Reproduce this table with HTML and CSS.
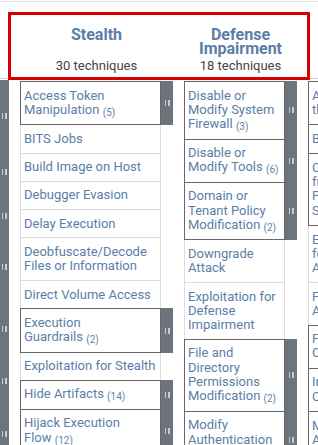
FILE: index.html
```html
<!DOCTYPE html>
<html lang="en">
<head>
<meta charset="utf-8">
<title>ATT&amp;CK Matrix</title>
<link rel="stylesheet" href="styles.css">
</head>
<body>
<div class="topline"></div>
<div class="matrix">
  <div class="head">
    <div class="hspace"></div>
    <div class="tactic w1"><div class="tname">Stealth</div><div class="tcount">30 techniques</div></div>
    <div class="tactic w2"><div class="tname">Defense Impairment</div><div class="tcount">18 techniques</div></div>
    <div class="tactic w3"><div class="tname">Credential Access</div><div class="tcount">17 techniques</div></div>
  </div>
  <div class="grid">
    <div class="prevbar">
      <div class="seg s72"><span class="grip"></span></div>
      <div class="seg s40"><span class="grip"></span></div>
      <div class="seg s48"><span class="grip"></span></div>
      <div class="seg s54"><span class="grip"></span></div>
      <div class="seg s70"><span class="grip"></span></div>
      <div class="seg s34"><span class="grip"></span></div>
      <div class="seg s72"><span class="grip"></span></div>
    </div>

    <div class="col w1">
      <div class="row sup"><div class="cell">Access Token Manipulation&nbsp;<span class="cnt">(5)</span></div><div class="bar"><span class="grip"></span></div></div>
      <div class="row"><div class="cell">BITS Jobs</div></div>
      <div class="row"><div class="cell">Build Image on Host</div></div>
      <div class="row"><div class="cell">Debugger Evasion</div></div>
      <div class="row"><div class="cell">Delay Execution</div></div>
      <div class="row"><div class="cell">Deobfuscate/Decode Files or Information</div></div>
      <div class="row"><div class="cell">Direct Volume Access</div></div>
      <div class="row sup"><div class="cell">Execution Guardrails&nbsp;<span class="cnt">(2)</span></div><div class="bar"><span class="grip"></span></div></div>
      <div class="row"><div class="cell">Exploitation for Stealth</div></div>
      <div class="row sup"><div class="cell">Hide Artifacts&nbsp;<span class="cnt">(14)</span></div><div class="bar"><span class="grip"></span></div></div>
      <div class="row sup"><div class="cell">Hijack Execution Flow&nbsp;<span class="cnt">(12)</span></div><div class="bar"><span class="grip"></span></div></div>
    </div>

    <div class="col w2">
      <div class="row sup"><div class="cell">Disable or Modify System Firewall&nbsp;<span class="cnt">(3)</span></div><div class="bar"><span class="grip"></span></div></div>
      <div class="row sup"><div class="cell">Disable or Modify Tools&nbsp;<span class="cnt">(6)</span></div><div class="bar"><span class="grip"></span></div></div>
      <div class="row sup"><div class="cell">Domain or Tenant Policy Modification&nbsp;<span class="cnt">(2)</span></div><div class="bar"><span class="grip"></span></div></div>
      <div class="row"><div class="cell">Downgrade Attack</div></div>
      <div class="row"><div class="cell">Exploitation for Defense Impairment</div></div>
      <div class="row sup"><div class="cell">File and Directory Permissions Modification&nbsp;<span class="cnt">(2)</span></div><div class="bar"><span class="grip"></span></div></div>
      <div class="row sup"><div class="cell">Modify Authentication Process&nbsp;<span class="cnt">(9)</span></div><div class="bar"><span class="grip"></span></div></div>
    </div>

    <div class="col w3">
      <div class="row sup"><div class="cell">Adversary-in-the-Middle&nbsp;<span class="cnt">(4)</span></div><div class="bar"><span class="grip"></span></div></div>
      <div class="row sup"><div class="cell">Brute Force&nbsp;<span class="cnt">(4)</span></div><div class="bar"><span class="grip"></span></div></div>
      <div class="row sup"><div class="cell">Credentials from Password Stores&nbsp;<span class="cnt">(6)</span></div><div class="bar"><span class="grip"></span></div></div>
      <div class="row"><div class="cell">Exploitation for Credential Access</div></div>
      <div class="row"><div class="cell">Forced Authentication</div></div>
      <div class="row sup"><div class="cell">Forge Web Credentials&nbsp;<span class="cnt">(2)</span></div><div class="bar"><span class="grip"></span></div></div>
      <div class="row sup"><div class="cell">Input Capture&nbsp;<span class="cnt">(4)</span></div><div class="bar"><span class="grip"></span></div></div>
      <div class="row sup"><div class="cell">Modify Authentication Process&nbsp;<span class="cnt">(9)</span></div><div class="bar"><span class="grip"></span></div></div>
    </div>
  </div>
  <div class="highlight"></div>
</div>
</body>
</html>
```

FILE: styles.css
```css
html, body {
  margin: 0;
  padding: 0;
  overflow: hidden;
  background: #fff;
}
body {
  font-family: Roboto, "Liberation Sans", Arial, sans-serif;
  width: 318px;
  height: 445px;
  position: relative;
}
.topline {
  height: 1px;
  margin-top: 1px;
  background: #e4e4e4;
}
.matrix {
  width: 480px;
}
.head {
  display: flex;
  gap: 11px;
  padding: 26px 0 5px;
  border-bottom: 1px solid #cfcfcf;
}
.hspace { width: 9px; flex: none; }
.w1 { width: 153px; flex: none; }
.w2 { width: 113px; flex: none; }
.w3 { width: 104px; flex: none; }
.tactic {
  display: flex;
  flex-direction: column;
  align-items: center;
  text-align: center;
}
.tname {
  flex: 1;
  font-weight: 700;
  font-size: 16px;
  line-height: 13.5px;
  color: #5b7ea8;
  width: 100px;
}
.tcount {
  margin-top: 3px;
  font-size: 13px;
  line-height: 15px;
  color: #444;
}
.grid {
  display: flex;
  gap: 11px;
  align-items: flex-start;
}
.prevbar {
  width: 9px;
  flex: none;
  margin-top: 1px;
  display: flex;
  flex-direction: column;
  background: #6c757d;
}
.seg {
  display: flex;
  align-items: center;
  justify-content: center;
}
.s72 { height: 72px; }
.s40 { height: 40px; }
.s48 { height: 48px; }
.s54 { height: 54px; }
.s70 { height: 70px; }
.s34 { height: 34px; }
.col {
  display: flex;
  flex-direction: column;
  padding-top: 2px;
}
.row {
  display: flex;
  margin-top: -1px;
}
.row:first-child { margin-top: 0; }
.row.sup { z-index: 1; }
.cell {
  flex: none;
  box-sizing: border-box;
  border: 1px solid #dcdcdc;
  padding: 6.5px 0 6.5px 3px;
  font-size: 13px;
  line-height: 14.3px;
  color: #5b7ea8;
  background: #fff;
}
.w1 .cell { width: 141px; }
.w1 .sup .cell { padding-right: 10px; }
.w2 .cell { width: 101px; }
.w3 .cell { width: 92px; }
.row.sup .cell { border-color: #676767; }
.cnt {
  font-size: 10px;
  line-height: 1;
  vertical-align: -2px;
  color: #6683a8;
}
.bar {
  width: 12px;
  flex: none;
  background: #6c757d;
  display: flex;
  align-items: center;
  justify-content: center;
}
.grip {
  display: block;
  width: 5px;
  height: 6px;
  background: linear-gradient(to right, #c9ccd0 0 1.5px, transparent 1.5px 3.5px, #c9ccd0 3.5px 5px);
}
.highlight {
  position: absolute;
  left: 8px;
  top: 12px;
  width: 302px;
  height: 68px;
  box-sizing: border-box;
  border: 3px solid #d20000;
  pointer-events: none;
}
```
